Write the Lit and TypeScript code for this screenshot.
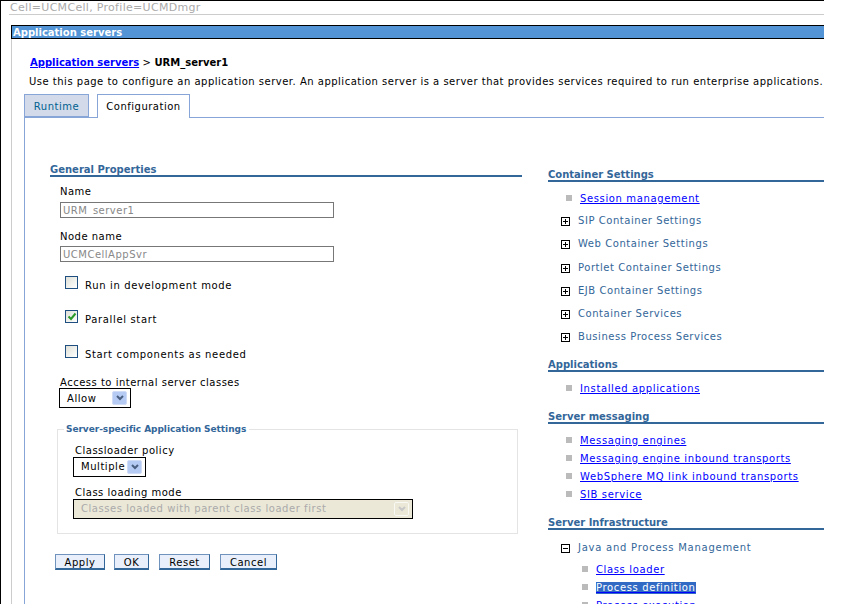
import { LitElement, html, css } from "lit";
import { customElement } from "lit/decorators.js";

const chev = (c: string) => html`<svg width="8" height="6" viewBox="0 0 8 6"><path d="M1 1 L4 4 L7 1" fill="none" stroke="${c}" stroke-width="2"/></svg>`;
const plus = html`<svg class="tog" width="9" height="9" viewBox="0 0 9 9"><rect x=".5" y=".5" width="8" height="8" fill="#fff" stroke="#000"/><path d="M2 4.5H7M4.5 2V7" stroke="#000"/></svg>`;
const minus = html`<svg class="tog" width="9" height="9" viewBox="0 0 9 9"><rect x=".5" y=".5" width="8" height="8" fill="#fff" stroke="#000"/><path d="M2 4.5H7" stroke="#000"/></svg>`;

@customElement("app-root")
export class AppRoot extends LitElement {
  static styles = css`
    :host { display: block; width: 843px; height: 610px; background: #fff; font: 10px/12px "DejaVu Sans", Verdana, sans-serif; color: #000; overflow: hidden; }
    .page { box-sizing: border-box; width: 824px; height: 604px; border-left: 1px solid #000; border-top: 1px solid #000; overflow: hidden; }
    .cell { margin-left: 8px; height: 13px; border-bottom: 1px solid #ccc; color: #aaa; line-height: 13px; font-size: 11px; letter-spacing: .3px; white-space: nowrap; padding-left: 1px; }
    .portlet { margin: 10px 0 0 10px; }
    .bar { height: 12px; border: 1px solid #000; border-right: 0; background: #5294d6; color: #fff; font-weight: bold; line-height: 13px; padding-left: 1px; }
    .body { border-left: 1px solid #ccc; padding: 18px 0 0 12px; height: 565px; box-sizing: border-box; }
    .crumb { margin-left: 6px; line-height: 12px; font-weight: bold; }
    .crumb a { color: #00f; text-decoration: underline; }
    .crumb span { font-weight: normal; }
    .desc { margin: 7px 0 0 5px; white-space: nowrap; letter-spacing: .5px; }
    .tabs { display: flex; margin-top: 6px; height: 24px; align-items: flex-start; letter-spacing: .5px; }
    .tab { box-sizing: border-box; height: 23px; border: 1px solid #87a5d6; line-height: 23px; text-align: center; }
    .tab.a { width: 65px; background: #d3dbeb; color: #00608f; }
    .tab.b { width: 93px; margin-left: 8px; height: 24px; border-bottom: 0; background: #fff; position: relative; z-index: 1; }
    .panel { border-top: 1px solid #87a5d6; border-left: 1px solid #87a5d6; margin-top: -1px; display: grid; grid-template-columns: 472px 276px; column-gap: 26px; padding: 0 0 0 25px; height: 500px; letter-spacing: .55px; }
    .h { color: #336699; font-weight: bold; border-bottom: 2px solid #336699; line-height: 12px; height: 11px; white-space: nowrap; letter-spacing: 0; }
    .left { padding-top: 46px; }
    .lab { line-height: 12px; margin-left: 10px; white-space: nowrap; letter-spacing: .5px; }
    .inp { box-sizing: border-box; display: block; width: 274px; height: 16px; border: 1px solid #777; margin: 4px 0 0 10px; padding: 0 2px; font: inherit; line-height: 14px; color: #888; background: #fff; letter-spacing: .5px; }
    .chk { display: flex; align-items: flex-start; margin-left: 15px; height: 14px; letter-spacing: .65px; }
    .box { box-sizing: border-box; width: 13px; height: 13px; border: 1px solid #1f4f80; background: linear-gradient(135deg,#e0e0d8,#fff); flex: none; display: flex; align-items: center; justify-content: center; }
    .chk span { margin: 4px 0 0 7px; white-space: nowrap; }
    .sel { box-sizing: border-box; height: 20px; border: 1px solid #000; background: #fff; display: flex; align-items: center; justify-content: space-between; padding: 1px 3px 0 7px; }
    fieldset .sel { padding-top: 0; }
    .arr { box-sizing: border-box; width: 15px; height: 14px; margin-top: -1px; background: #b6cbf4; border: 1px solid #d0dcf6; border-radius: 2px; display: flex; align-items: center; justify-content: center; }
    .sel.off { background: #ebe8d8; color: #aaa; }
    .sel.off .arr { background: #ebe8d8; border-color: #f8f8f4; }
    fieldset { box-sizing: border-box; width: 461px; height: 111px; margin: 15px 0 0 7px; padding: 0; border: 1px solid #e4e4e4; display: block; }
    legend { color: #336699; font-weight: bold; font-size: 9px; padding: 0 3px 0 2px; margin-left: 6px; line-height: 12px; white-space: nowrap; letter-spacing: -.05px; }
    .btns { display: flex; margin: 20px 0 0 5px; }
    .btn { box-sizing: border-box; height: 16px; background: #e9f0fb; border: 1px solid #6f93bc; border-bottom: 2px solid #336699; border-right-color: #336699; line-height: 15px; text-align: center; }
    .right { padding-top: 51px; }
    .row { display: flex; align-items: center; white-space: nowrap; height: 12px; }
    .bul { width: 6px; height: 6px; background: #bbb; flex: none; margin: -3px 8px 0 0; }
    a.l { color: #00f; text-decoration: underline; letter-spacing: .63px; }
    .tog { flex: none; margin-right: 8px; }
    .t { color: #336699; letter-spacing: .55px; }
    .t.j { letter-spacing: .75px; }
    a.sel-t { background: #316ac5; color: #fff; text-decoration-color: #00f; }
  `;
  private rows(items: string[], tops: number[]) {
    return items.map((s, i) => html`<div class="row" style="margin:${tops[i]}px 0 0 13px">${plus}<span class="t">${s}</span></div>`);
  }
  private links(items: string[], first: number, step: number) {
    return items.map((s, i) => html`<div class="row" style="margin:${i ? step : first}px 0 0 18px"><i class="bul"></i><a class="l">${s}</a></div>`);
  }
  render() {
    return html`<div class="page">
      <div class="cell">Cell=UCMCell, Profile=UCMDmgr</div>
      <div class="portlet">
        <div class="bar">Application servers</div>
        <div class="body">
          <div class="crumb"><a>Application servers</a> <span>&gt;</span> URM_server1</div>
          <div class="desc">Use this page to configure an application server. An application server is a server that provides services required to run enterprise applications.</div>
          <div class="tabs"><div class="tab a">Runtime</div><div class="tab b">Configuration</div></div>
          <div class="panel">
            <div class="left">
              <div class="h">General Properties</div>
              <div class="lab" style="margin-top:9px">Name</div>
              <input class="inp" value="URM_server1" readonly />
              <div class="lab" style="margin-top:13px">Node name</div>
              <input class="inp" style="margin-top:3px" value="UCMCellAppSvr" readonly />
              <div class="chk" style="margin-top:14px"><div class="box"></div><span>Run in development mode</span></div>
              <div class="chk" style="margin-top:20px"><div class="box"><svg width="10" height="9" viewBox="0 0 10 9"><path d="M1.5 4.5L4 7L8.5 1.5" fill="none" stroke="#2a9a2a" stroke-width="2"/></svg></div><span>Parallel start</span></div>
              <div class="chk" style="margin-top:21px"><div class="box"></div><span>Start components as needed</span></div>
              <div class="lab" style="margin-top:18px">Access to internal server classes</div>
              <div class="sel" style="width:72px;margin:-1px 0 0 9px">Allow<div class="arr">${chev("#4a5f80")}</div></div>
              <fieldset><legend>Server-specific Application Settings</legend>
                <div class="lab" style="margin:10px 0 0 17px">Classloader policy</div>
                <div class="sel" style="width:73px;margin:0 0 0 15px">Multiple<div class="arr">${chev("#4a5f80")}</div></div>
                <div class="lab" style="margin:10px 0 0 17px">Class loading mode</div>
                <div class="sel off" style="width:340px;margin:0 0 0 15px">Classes loaded with parent class loader first<div class="arr">${chev("#c8c8c8")}</div></div>
              </fieldset>
              <div class="btns">
                <div class="btn" style="width:50px">Apply</div>
                <div class="btn" style="width:35px;margin-left:9px">OK</div>
                <div class="btn" style="width:51px;margin-left:10px">Reset</div>
                <div class="btn" style="width:57px;margin-left:10px">Cancel</div>
              </div>
            </div>
            <div class="right">
              <div class="h">Container Settings</div>
              ${this.links(["Session management"], 11, 0)}
              ${this.rows(["SIP Container Settings","Web Container Settings","Portlet Container Settings","EJB Container Settings","Container Services","Business Process Services"],[10,11,12,11,11,11])}
              <div class="h" style="margin-top:16px">Applications</div>
              ${this.links(["Installed applications"], 11, 0)}
              <div class="h" style="margin-top:16px">Server messaging</div>
              ${this.links(["Messaging engines","Messaging engine inbound transports","WebSphere MQ link inbound transports","SIB service"], 11, 6)}
              <div class="h" style="margin-top:16px">Server Infrastructure</div>
              <div class="row" style="margin:12px 0 0 13px">${minus}<span class="t j">Java and Process Management</span></div>
              <div class="row" style="margin:10px 0 0 34px"><i class="bul"></i><a class="l">Class loader</a></div>
              <div class="row" style="margin:6px 0 0 34px"><i class="bul"></i><a class="l sel-t">Process definition</a></div>
              <div class="row" style="margin:6px 0 0 34px"><i class="bul"></i><a class="l">Process execution</a></div>
            </div>
          </div>
        </div>
      </div>
    </div>`;
  }
}
